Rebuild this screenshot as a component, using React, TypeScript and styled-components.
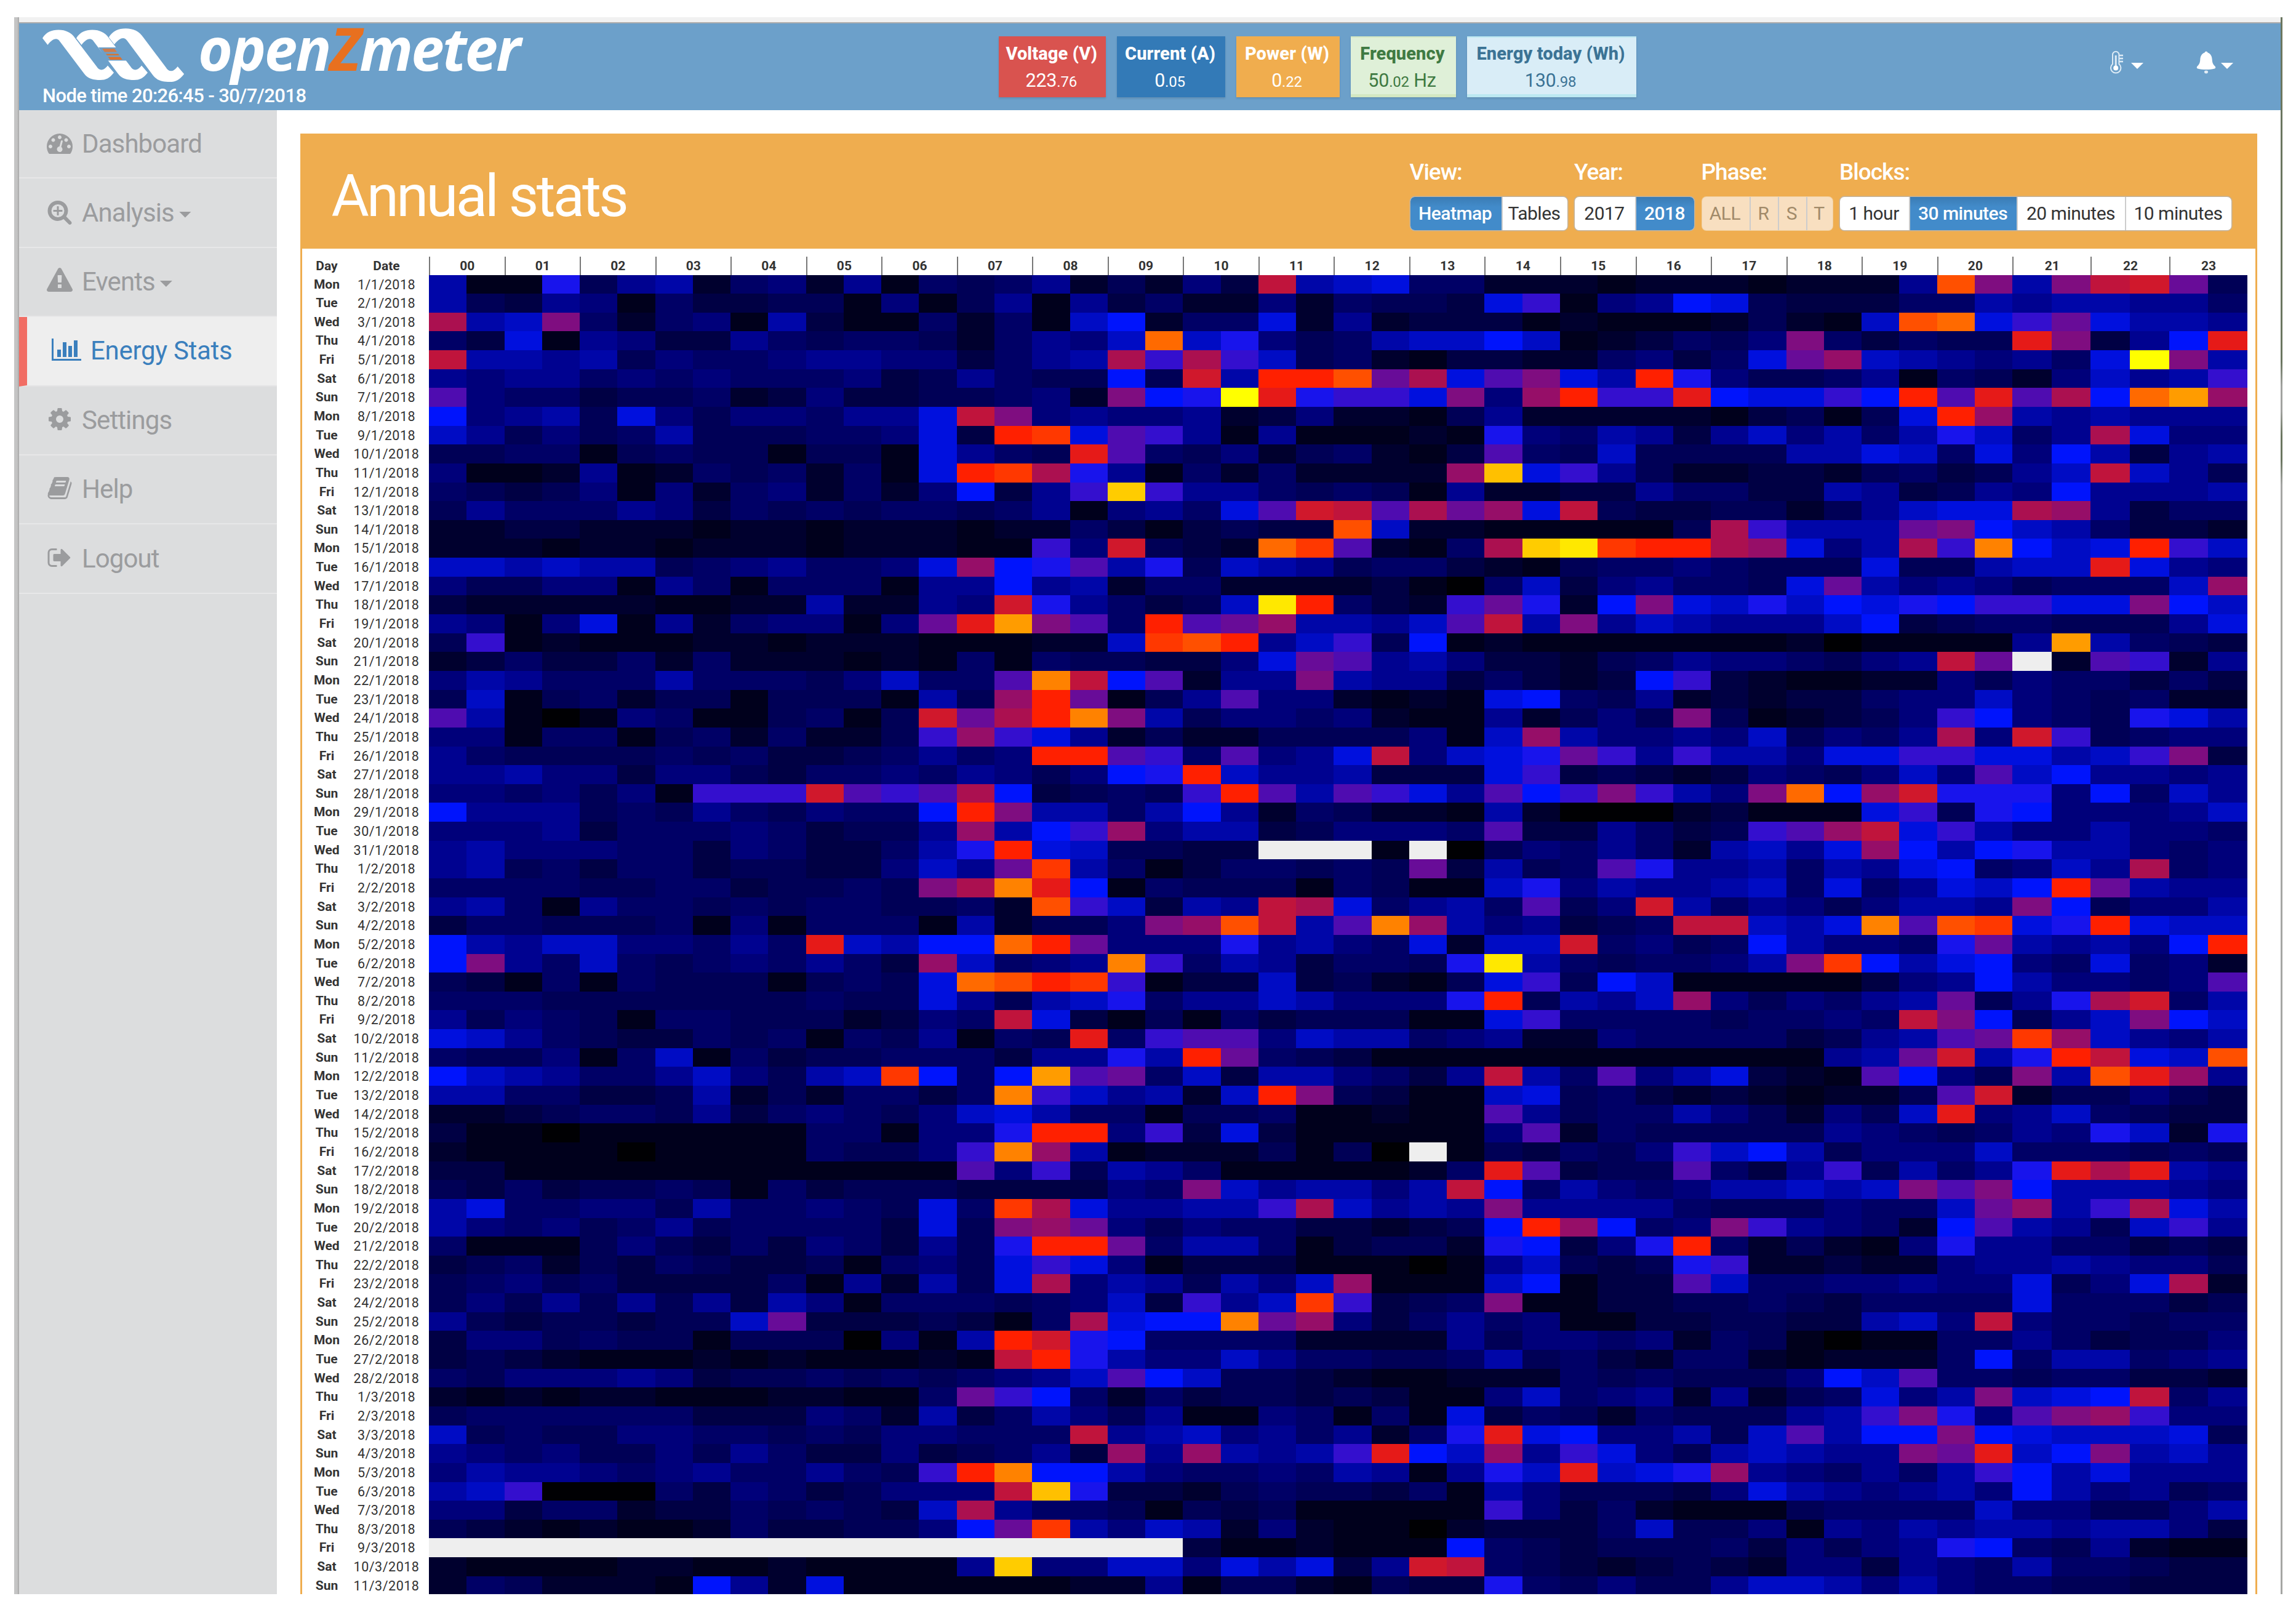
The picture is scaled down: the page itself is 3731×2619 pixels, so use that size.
import React from 'react';
import styled, { createGlobalStyle, css } from 'styled-components';

const GlobalStyle = createGlobalStyle`
  * { box-sizing: border-box; }
  html, body { margin: 0; padding: 0; background: #fff; }
  body { font-family: Roboto, "Open Sans", "Liberation Sans", sans-serif; color: #333; }
`;

const ORANGE = '#efad4f';
const BLUE = '#6ca0ca';

/* ---------- heat map data: one character per half hour ---------- */

const PALETTE: Record<string, string> = {
  '0': '#000003', '1': '#00001c', '2': '#00002e', '3': '#000044', '4': '#000056',
  '5': '#000066', '6': '#00007a', '7': '#000290', '8': '#0006a8', '9': '#000cc4',
  a: '#0010de', b: '#0014fc', c: '#1814ec', d: '#340fce', e: '#4f0cb0',
  f: '#680c98', g: '#7f0d80', h: '#960e68', i: '#ab1050', j: '#c0143c',
  k: '#d0182c', l: '#e61a18', m: '#ff2000', n: '#ff3800', o: '#ff5000',
  p: '#ff6a00', q: '#ff8200', r: '#ff9c00', s: '#ffc000', t: '#ffcc00',
  u: '#ffe800', v: '#ffff00', W: '#eeeeee',
};

const READINGS: string[] = [
  '811c4782562715 45724263j89a552221 22212227og8gjkf4',
  '84376153344161 47173522625443ad16 7ba4333558788775',
  'i89g5256183115 2519b255a272333121 1124219opadfa887',
  '53a17633754554 25769p9c645899b912 3546g53544lg37bl',
  'j8878465567766 3578idid9452133225 635afh987675avg8',
  '76775656555634 7544b4k8mmofiaega8 mc6445715426978d',
  'e6553445236334 4562gbcvlcddag6hmd dlbaadbmeleibprh',
  'b6784a6466577a jg6766723622147222 2213414amh878777',
  '9746458444556a 3mnaed71711121c658 73796858c957ia66',
  '4455145441441a 754le546245213e549 444488a95a6b8378',
  '6112712545251a mnic715252222hsad7 422332453479j974',
  '54346162562526 b37dtd775454172233 75533873476b7778',
  '47555763545455 4571675aekjeifhaj4 33442479aaih7355',
  '22332221221222 1225313433o9221111 14id888fgb985332',
  '22212212221222 11d6k432pne215itun mmiha68idqb9amd9',
  '9989884567556a hbce8c498745532145 565444a44899la76',
  '64466175155517 7b7825522223105936 7554af867645559h',
  '32222211228227 6kc75349um532dfc2b ga9c9bacbddaagb9',
  '7616a17256616f lrge5mefh8879ej8g7 987779b34554447a',
  '4d121112212221 11229nom79d4b12111 11112011117r8543',
  '23533525222121 51544336afe7863324 57665467jfW2ed27',
  '68755585554695 5eqjbe277g87735323 bd32112264655353',
  '49145244144418 4hmf147e662121ab54 7232335669654522',
  'e810165114514 kfimqg84665 62117246 4g412346db654ca8',
  '6615514525224 dhda7242244 44619h86 67694657i6kd4566',
  '7544445453345 756mmed5e67 aj69acfd 7d886aaddaa89dg3',
  '7786636643556 57646bcm977 8333ad34 323654696e9b7767',
  '6656461dddked eib3454dme8 eda7ebdg d86gpbhkccc6b597',
  'b777454754655 bmg8858b725 42218200 023111ad4cb66679',
  '6667355565344 7h8bdh68834 6665e337 534dehjad8668665',
  '7866655365335 8cma94433WW W1W04657 52897ahb8bc88656',
  '7845355344336 97fn8513554 54f3845e c778587ab5697i56',
  '5555445534454 giqlb154441 54119c68 77895a57a9bmf877',
  '7851755454554 452od9387ji a5785e46 k857646887gb4668',
  '3554445161555 182446ghoj8 eqh86734 5jj98aqeonacma99',
  'b879966575l98 bbpmf666c78 65a299k5 645b8665cf8786bm',
  'bg75954565753 h9567qd5873 554cu854 5568gnb8ab65a562',
  '4315154441454 apomnd13393 4214ad4b 911111367b86656e',
  '5554444444544 a7489c57798 666cm487 9h646578f47cik58',
  '7465415544423 65ja3141534 4411ad55 5545565jgb479gb9',
  'a975433545154 7154l5dee69 88567226 55553478efnh9768',
  '5446159153445 55377c8mf54 31111111 1111178fk8cmja9o',
  'b98755796489n b5bref59388 6537j85e 68a321eb64g8olh7',
  '8855334824255 35qd97829mg 43119a45 32321224ek244643',
  '2234554735654 69a85514451 1211e745 58642649l6795433',
  '3110111111551 66cmm6d3a31 11116e25 444447654576c92c',
  '2111101111544 6dqh8122241 40W14354 6d9b846669555454',
  '3311111111111 1e6d4875111 1125le34 4e537d4857clil87',
  '4353445415344 433336 5g978 868jb586 5688989gegb88876',
  '8a55664855654 a5nia7788di 9787g777 754446559fh8dia8',
  '8656457455553 a4ghf646553 3234bmhb 56gd7652be8749d7',
  '5111464353653 74cmmf58851 3442cb36 cm524216c7755343',
  '3452435433415 64ada613331 11017943 4cd2232267787664',
  '4564533335172 84ai6874869 h1119b13 3e95566766a46ai2',
  '4647474738615 5545693d79n d345g113 3445435555a55534',
  '743443449f333 4315iabbqfh 63575611 334433896j655455',
  '3664544144406 18mkcb55552 22274665 6254101155753446',
  '3432111212111 21jmc866975 54458453 255212225b588567',
  '5466676344545 45679eb9443 21122254 54446b9e55455332',
  '2121221112211 5fdb5253443 43116956 727245a68g9abj57',
  '4555555333652 83586471165 151a3542 544478dgc6eghd66',
  '9454466554546 6555j789675 725clab6 6849e8bbgba999a4',
  '7656446475336 34573h7h878 dlb9h7da 6489877gfl9bg897',
  '6877656755754 dmqbb865565 8717c9l9 ach765758db8a777',
  '89d0005365346 66jsc332454 43518644 436a876786b86745',
  '6635523354543 9i755414341 1111d635 2111455559664468',
  '4321211253344 6bfn8698262 11023335 9446176878878863',
  'WWWWWWWWWWWWW WWWWWWW3112 111b5434 44536467cb547211',
  '2111122112111 17t66996a8a 37kj5432 3432663765855433',
  '2542221b72a11 11112271442 1433c546 4479986865544333',
].map((line) => line.replace(/\s+/g, ''));

const DAY_NAMES = ['Sun', 'Mon', 'Tue', 'Wed', 'Thu', 'Fri', 'Sat'];

const DAYS = READINGS.map((values, index) => {
  const date = new Date(2018, 0, 1 + index);
  return {
    day: DAY_NAMES[date.getDay()],
    date: `${date.getDate()}/${date.getMonth() + 1}/${date.getFullYear()}`,
    values: values.split(''),
  };
});

const HOURS = Array.from({ length: 24 }, (_, h) => String(h).padStart(2, '0'));

/* ---------- window frame ---------- */

const Page = styled.div`
  width: 3731px;
  height: 2619px;
  padding: 28px 0 0 23px;
  background: #fff;
  overflow: hidden;
`;

const Frame = styled.div`
  display: grid;
  grid-template-columns: 8px 3675px 3px;
  grid-template-rows: 2562px;
  width: 3686px;
`;

const LeftEdge = styled.div`
  background: linear-gradient(90deg, #c4c4c4 0 60%, #a6a6a6);
`;

const RightEdge = styled.div`
  background: linear-gradient(180deg, #6b7660 0 560px, #a2a3a0 600px 640px, #6b7660 680px 720px, #a5a6a4 760px);
`;

const Screen = styled.div`
  display: flex;
  flex-direction: column;
  min-height: 0;
`;

const ToolbarEdge = styled.div`
  flex: none;
  height: 10px;
  background: #f1f1f1;
  border-bottom: 2px solid #adadad;
`;

const Body = styled.div`
  display: flex;
  flex: 1;
  min-height: 0;
  overflow: hidden;
`;

/* ---------- header ---------- */

const Header = styled.header`
  display: flex;
  flex: none;
  height: 141px;
  background: ${BLUE};
  color: #fff;
`;

const Brand = styled.div`
  width: 1592px;
  padding-left: 38px;
`;

const BrandRow = styled.div`
  display: flex;
  gap: 22px;
  height: 98px;
`;

const Mark = styled.svg`
  display: block;
  margin-top: 7px;
`;

const Wordmark = styled.div`
  font: italic 700 96px/80px "Open Sans", sans-serif;
  letter-spacing: -2.8px;
  white-space: nowrap;
`;

const Zed = styled.span`
  color: #e8701f;
`;

const NodeTime = styled.div`
  font-size: 31px;
  font-weight: 500;
  line-height: 39px;
  letter-spacing: -0.6px;
`;

const Stats = styled.div`
  display: flex;
  gap: 18px;
  padding-top: 21px;
`;

type Tone = 'danger' | 'primary' | 'warning' | 'success' | 'info';

const TONES: Record<Tone, { bg: string; edge: string; fg: string }> = {
  danger: { bg: '#d9534f', edge: '#d9534f', fg: '#fff' },
  primary: { bg: '#337ab7', edge: '#337ab7', fg: '#fff' },
  warning: { bg: '#f0ad4e', edge: '#f0ad4e', fg: '#fff' },
  success: { bg: '#dff0d8', edge: '#d3e8c2', fg: '#3f7a42' },
  info: { bg: '#d9edf7', edge: '#bce8f1', fg: '#3b7395' },
};

const StatBox = styled.div<{ $tone: Tone; $width: number }>`
  width: ${(p) => p.$width}px;
  height: 99px;
  padding-top: 11px;
  text-align: center;
  white-space: nowrap;
  color: ${(p) => TONES[p.$tone].fg};
  background: ${(p) => TONES[p.$tone].bg};
  box-shadow: inset 0 -5px 0 ${(p) => TONES[p.$tone].edge}, inset 0 2px 0 ${(p) => TONES[p.$tone].edge},
    0 2px 3px rgba(0, 0, 0, 0.12);
`;

const StatName = styled.div`
  margin-left: -2px;
  font-size: 29px;
  font-weight: 800;
  line-height: 35px;
  letter-spacing: 0.1px;
`;

const StatValue = styled.div`
  margin-left: -3px;
  font-size: 30.5px;
  line-height: 52px;
  letter-spacing: -0.2px;

  small { font-size: 24px; }
`;

const HeaderTools = styled.div`
  display: flex;
  align-items: flex-start;
  margin-left: auto;
  padding: 44px 77px 0 0;
`;

const Tool = styled.div<{ $gap: number; $before: number }>`
  display: flex;
  gap: ${(p) => p.$gap}px;
  margin-left: ${(p) => p.$before}px;
`;

const Caret = styled.span<{ $top: number }>`
  width: 20px;
  height: 10px;
  margin-top: ${(p) => p.$top}px;
  background: currentColor;
  clip-path: polygon(0 0, 100% 0, 50% 100%);
`;

/* ---------- sidebar ---------- */

const Sidebar = styled.nav`
  flex: none;
  width: 418.5px;
  background: #dcddde;
`;

const NavItem = styled.div<{ $active?: boolean }>`
  display: flex;
  align-items: center;
  height: 112.4px;
  padding: 0 0 1px 45px;
  border-bottom: 2px solid #e7e7e8;
  font-size: 42px;
  letter-spacing: -0.9px;
  color: #9b9c9e;

  &:first-child { height: 111.4px; }
  ${(p) =>
    p.$active &&
    css`
      padding-left: 40px;
      border-left: 13px solid #f16d64;
      border-bottom-color: #e4e4e5;
      background: #eee;
      color: #3a7fbd;
      letter-spacing: -0.3px;
    `}
`;

const NavIcon = styled.svg`
  flex: none;
  height: 42px;
  margin: 0 15px 3px 0;
  fill: currentColor;
`;

const NavCaret = styled(Caret)`
  margin-left: 8px;
`;

/* ---------- panel ---------- */

const Main = styled.main`
  flex: 1;
  padding: 38px 38px 0;
`;

const Panel = styled.section`
  height: 2600px;
  border: 3px solid ${ORANGE};
  background: #fff;
`;

const PanelHead = styled.div`
  display: flex;
  justify-content: space-between;
  height: 184px;
  padding: 0 39px 0 48px;
  background: ${ORANGE};
  color: #fff;
`;

const Title = styled.h1`
  margin: 0;
  padding-top: 14px;
  font-size: 94px;
  font-weight: 400;
  line-height: 170px;
  letter-spacing: -3.7px;
`;

const Filters = styled.div`
  display: flex;
  gap: 12.5px;
  margin-top: 40px;
`;

const FilterLabel = styled.div`
  height: 60px;
  margin-left: -1px;
  font-size: 37px;
  font-weight: 500;
  line-height: 40px;
  letter-spacing: -1px;
`;

const ButtonGroup = styled.div<{ $disabled?: boolean }>`
  display: flex;
  height: 54px;
  overflow: hidden;
  border-radius: 7px;
  box-shadow: 0 0 0 1.5px rgba(190, 180, 165, 0.9);
  background: #fff;
  ${(p) =>
    p.$disabled &&
    css`
      background: #f8dfc0;
      box-shadow: 0 0 0 1px #f0cf9f;
    `}
`;

const Segment = styled.button<{ $width: number; $active?: boolean; $disabled?: boolean }>`
  width: ${(p) => p.$width}px;
  padding: 0 2px 0 0;
  border: 0;
  background: transparent;
  color: #333;
  font: 400 30px/54px Roboto, sans-serif;
  letter-spacing: -0.5px;
  white-space: nowrap;

  & + & { border-left: 2px solid ${(p) => (p.$disabled ? '#dfc5a2' : '#ccc')}; }
  ${(p) =>
    p.$disabled &&
    css`
      color: #a18a69;
    `}
  ${(p) =>
    p.$active &&
    css`
      background: linear-gradient(180deg, #3b7cb4, #428bca 30%);
      color: #fff;
      font-weight: 500;
      && { border-left: 0; }
    `}
`;

/* ---------- heat map ---------- */

const LINE_COLUMNS = '81px 113px 12.5px';

const HeadLine = styled.div`
  display: grid;
  grid-template-columns: ${LINE_COLUMNS} repeat(21, 122.54px) repeat(3, 127.2px);
  height: 42.5px;
  padding-top: 12.5px;
  font-size: 21px;
  font-weight: 700;
  line-height: 30px;
  text-align: center;
`;

const HourLabel = styled.div`
  border-left: 2px solid #777;
  border-bottom: 1px solid #888;
`;

const DayLine = styled.div`
  display: grid;
  grid-template-columns: ${LINE_COLUMNS} repeat(42, 61.27px) repeat(6, 63.6px);
  height: 30.65px;
  font-size: 21px;
  line-height: 31.8px;
  text-align: center;
`;

const DayName = styled.div`
  font-weight: 700;
`;

const DayDate = styled.div`
  font-size: 21.5px;
  letter-spacing: 0.5px;
  white-space: nowrap;
`;

const Spacer = styled.div``;

const Cell = styled.div<{ $level: string }>`
  background: ${(p) => PALETTE[p.$level]};
`;

/* ---------- icons ---------- */

const ICONS = {
  dashboard:
    'M384 1152q0-53-37.5-90.5t-90.5-37.5-90.5 37.5-37.5 90.5 37.5 90.5 90.5 37.5 90.5-37.5 37.5-90.5zm192-448q0-53-37.5-90.5t-90.5-37.5-90.5 37.5-37.5 90.5 37.5 90.5 90.5 37.5 90.5-37.5 37.5-90.5zm428 481l101-382q6-26-7.5-48.5t-38.5-29.5-48 6.5-30 39.5l-101 382q-60 5-107 43.5t-63 98.5q-20 77 20 146t117 89 146-20 89-117q16-60-6-117t-72-91zm660-33q0-53-37.5-90.5t-90.5-37.5-90.5 37.5-37.5 90.5 37.5 90.5 90.5 37.5 90.5-37.5 37.5-90.5zm-640-640q0-53-37.5-90.5t-90.5-37.5-90.5 37.5-37.5 90.5 37.5 90.5 90.5 37.5 90.5-37.5 37.5-90.5zm448 192q0-53-37.5-90.5t-90.5-37.5-90.5 37.5-37.5 90.5 37.5 90.5 90.5 37.5 90.5-37.5 37.5-90.5zm320 448q0 261-141 483-19 29-54 29h-1402q-35 0-54-29-141-221-141-483 0-182 71-348t191-286 286-191 348-71 348 71 286 191 191 286 71 348z',
  search:
    'M1088 800v64q0 13-9.5 22.5t-22.5 9.5h-224v224q0 13-9.5 22.5t-22.5 9.5h-64q-13 0-22.5-9.5t-9.5-22.5v-224h-224q-13 0-22.5-9.5t-9.5-22.5v-64q0-13 9.5-22.5t22.5-9.5h224v-224q0-13 9.5-22.5t22.5-9.5h64q13 0 22.5 9.5t9.5 22.5v224h224q13 0 22.5 9.5t9.5 22.5zm128 32q0-185-131.5-316.5t-316.5-131.5-316.5 131.5-131.5 316.5 131.5 316.5 316.5 131.5 316.5-131.5 131.5-316.5zm512 832q0 53-37.5 90.5t-90.5 37.5q-54 0-90-38l-343-342q-179 124-399 124-143 0-273.5-55.5t-225-150-150-225-55.5-273.5 55.5-273.5 150-225 225-150 273.5-55.5 273.5 55.5 225 150 150 225 55.5 273.5q0 220-124 399l343 343q37 37 37 90z',
  warning:
    'M1024 1375v-190q0-14-9.5-23.5t-22.5-9.5h-192q-13 0-22.5 9.5t-9.5 23.5v190q0 14 9.5 23.5t22.5 9.5h192q13 0 22.5-9.5t9.5-23.5zm-2-374l18-459q0-12-10-19-13-11-24-11h-220q-11 0-24 11-10 7-10 21l17 457q0 10 10 16.5t24 6.5h185q14 0 23.5-6.5t10.5-16.5zm-14-934l768 1408q35 63-2 126-17 29-46.5 46t-63.5 17h-1536q-34 0-63.5-17t-46.5-46q-37-63-2-126l768-1408q17-31 47-49t65-18 65 18 47 49z',
  chart:
    'M640 896v512h-256v-512h256zm384-512v1024h-256v-1024h256zm1024 1152v128h-2048v-1536h128v1408h1920zm-640-896v768h-256v-768h256zm384-384v1152h-256v-1152h256z',
  cog:
    'M1152 896q0-106-75-181t-181-75-181 75-75 181 75 181 181 75 181-75 75-181zm512-109v222q0 12-8 23t-20 13l-185 28q-19 54-39 91 35 50 107 138 10 12 10 25t-9 23q-27 37-99 108t-94 71q-12 0-26-9l-138-108q-44 23-91 38-16 136-29 186-7 28-36 28h-222q-14 0-24.5-8.5t-11.5-21.5l-28-184q-49-16-90-37l-141 107q-10 9-25 9-14 0-25-11-126-114-165-168-7-10-7-23 0-12 8-23 15-21 51-66.5t54-70.5q-27-50-41-99l-183-27q-13-2-21-12.5t-8-23.5v-222q0-12 8-23t19-13l186-28q14-46 39-92-40-57-107-138-10-12-10-24 0-10 9-23 26-36 98.5-107.5t94.5-71.5q13 0 26 10l138 107q44-23 91-38 16-136 29-186 7-28 36-28h222q14 0 24.5 8.5t11.5 21.5l28 184q49 16 90 37l142-107q9-9 24-9 13 0 25 10 129 119 165 170 7 8 7 22 0 12-8 23-15 21-51 66.5t-54 70.5q26 50 41 98l183 28q13 2 21 12.5t8 23.5z',
  book:
    'M1703 478q40 57 18 129l-275 906q-19 64-76.5 107.5t-122.5 43.5h-923q-77 0-148.5-53.5t-99.5-131.5q-24-67-2-127 0-4 3-27t4-37q1-8-3-21.5t-3-19.5q2-11 8-21t16.5-23.5 16.5-23.5q23-38 45-91.5t30-91.5q3-10 .5-30t-.5-28q3-11 17-28t17-23q21-36 42-92t25-90q1-9-2.5-32t.5-28q4-13 22-30.5t22-22.5q19-26 42.5-84.5t27.5-96.5q1-8-3-25.5t-2-26.5q2-8 9-18t18-23 17-21q8-12 16.5-30.5t15-35 16-36 19.5-32 26.5-23.5 36-11.5 47.5 5.5l-1 3q38-9 51-9h761q74 0 114 56t18 130l-274 906q-36 119-71.5 153.5t-128.5 34.5h-869q-27 0-38 15-11 16-1 43 24 70 144 70h923q29 0 56-15.5t35-41.5l300-987q7-22 5-57 38 15 59 43zm-1064 2q-4 13 2 22.5t20 9.5h608q13 0 25.5-9.5t16.5-22.5l21-64q4-13-2-22.5t-20-9.5h-608q-13 0-25.5 9.5t-16.5 22.5zm-83 256q-4 13 2 22.5t20 9.5h608q13 0 25.5-9.5t16.5-22.5l21-64q4-13-2-22.5t-20-9.5h-608q-13 0-25.5 9.5t-16.5 22.5z',
  logout:
    'M704 1440q0 4 1 20t.5 26.5-3 23.5-10 19.5-20.5 6.5h-320q-119 0-203.5-84.5t-84.5-203.5v-704q0-119 84.5-203.5t203.5-84.5h320q13 0 22.5 9.5t9.5 22.5q0 4 1 20t.5 26.5-3 23.5-10 19.5-20.5 6.5h-320q-66 0-113 47t-47 113v704q0 66 47 113t113 47h312l11.5 1 11.5 3 8 5.5 7 9 2 13.5zm928-544q0 26-19 45l-544 544q-19 19-45 19t-45-19-19-45v-288h-448q-26 0-45-19t-19-45v-384q0-26 19-45t45-19h448v-288q0-26 19-45t45-19 45 19l544 544q19 19 19 45z',
};

type IconName = keyof typeof ICONS;

const NAV: { icon: IconName; label: string; caret?: boolean; active?: boolean }[] = [
  { icon: 'dashboard', label: 'Dashboard' },
  { icon: 'search', label: 'Analysis', caret: true },
  { icon: 'warning', label: 'Events', caret: true },
  { icon: 'chart', label: 'Energy Stats', active: true },
  { icon: 'cog', label: 'Settings' },
  { icon: 'book', label: 'Help' },
  { icon: 'logout', label: 'Logout' },
];

const STATS: { name: string; whole: string; part: string; unit?: string; tone: Tone; width: number }[] = [
  { name: 'Voltage (V)', whole: '223', part: '.76', tone: 'danger', width: 173.5 },
  { name: 'Current (A)', whole: '0', part: '.05', tone: 'primary', width: 176 },
  { name: 'Power (W)', whole: '0', part: '.22', tone: 'warning', width: 168 },
  { name: 'Frequency', whole: '50', part: '.02', unit: ' Hz', tone: 'success', width: 171 },
  { name: 'Energy today (Wh)', whole: '130', part: '.98', tone: 'info', width: 275 },
];

type Option = { text: string; width: number; active?: boolean };

const FILTERS: { label: string; disabled?: boolean; options: Option[] }[] = [
  { label: 'View:', options: [{ text: 'Heatmap', width: 148, active: true }, { text: 'Tables', width: 107 }] },
  { label: 'Year:', options: [{ text: '2017', width: 98 }, { text: '2018', width: 96, active: true }] },
  {
    label: 'Phase:',
    disabled: true,
    options: [{ text: 'ALL', width: 77 }, { text: 'R', width: 46 }, { text: 'S', width: 46 }, { text: 'T', width: 43 }],
  },
  {
    label: 'Blocks:',
    options: [
      { text: '1 hour', width: 112 },
      { text: '30 minutes', width: 175, active: true },
      { text: '20 minutes', width: 176 },
      { text: '10 minutes', width: 173 },
    ],
  },
];

const RIBBON =
  'M69 62C75 52 84 48.500 95 48.500C107 48.500 116 53 122 62L157 108C161 115 168 116 175 106.500L185 118C178 127 172 130 163 130C152 130 143 128 137 120L97 67C93 61 86 62 77.500 73Z';

function LogoMark() {
  return (
    <Mark width={231} height={90} viewBox="69 45 231 90" fill="#fff">
      <path d={RIBBON} />
      <path d={RIBBON} transform="translate(55 0)" />
      <path d={RIBBON} transform="translate(104 -5.500) scale(1.055 1.065)" />
      <path d="M160 77L192 77L207 98.500L174 98.500Z" fill={BLUE} />
      <path d="M166 79H186L190 84.500H170Z" fill="#cc7d4e" />
      <path d="M172 87.500H192L194 90H174Z" fill="#d9742f" />
      <path d="M175.500 92.500H195.500L199 97H179Z" fill="#dc7330" />
    </Mark>
  );
}

function Thermometer() {
  return (
    <svg width={22} height={38} viewBox="0 0 22 38" fill="none" stroke="#dceaf5" strokeWidth={2}>
      <path d="M4 22V7a5.200 5.200 0 0 1 10.400 0v15a8.200 8.200 0 1 1-10.400 0z" />
      <path d="M9.200 8v18" strokeWidth={3} />
      <circle cx={9.200} cy={28.500} r={4} fill="#fff" stroke="none" />
      <path d="M15 8h6M15 13h6M15 18h6" strokeWidth={2.400} />
    </svg>
  );
}

function Bell() {
  return (
    <svg width={32} height={38} viewBox="0 0 32 38" fill="#fff">
      <path d="M13.500 3.500a2.600 2.600 0 0 1 5 0C23.500 5 25.500 10 25.700 15c.3 6 2.300 8.500 5 11 1 1.500.6 3-1 3.500C21 31.500 11 31.500 2.300 29.500c-1.600-.5-2-2-1-3.500 2.700-2.500 4.700-5 5-11C6.500 10 8.500 5 13.500 3.500z" />
      <ellipse cx={16} cy={35} rx={3} ry={2.400} opacity={0.8} />
    </svg>
  );
}

export default function App() {
  return (
    <>
      <GlobalStyle />
      <Page>
        <Frame>
          <LeftEdge />
          <Screen>
            <ToolbarEdge />
            <Header>
              <Brand>
                <BrandRow>
                  <LogoMark />
                  <Wordmark>
                    open<Zed>Z</Zed>meter
                  </Wordmark>
                </BrandRow>
                <NodeTime>Node time 20:26:45 - 30/7/2018</NodeTime>
              </Brand>
              <Stats>
                {STATS.map((s) => (
                  <StatBox key={s.name} $tone={s.tone} $width={s.width}>
                    <StatName>{s.name}</StatName>
                    <StatValue>
                      {s.whole}
                      <small>{s.part}</small>
                      {s.unit}
                    </StatValue>
                  </StatBox>
                ))}
              </Stats>
              <HeaderTools>
                <Tool $gap={12} $before={0}>
                  <Thermometer />
                  <Caret $top={20} />
                </Tool>
                <Tool $gap={8} $before={86}>
                  <Bell />
                  <Caret $top={20} />
                </Tool>
              </HeaderTools>
            </Header>
            <Body>
              <Sidebar>
                {NAV.map((item) => (
                  <NavItem key={item.label} $active={item.active}>
                    <NavIcon viewBox={item.icon === 'chart' ? '0 0 2048 1792' : '0 0 1792 1792'}>
                      <path d={ICONS[item.icon]} />
                    </NavIcon>
                    {item.label}
                    {item.caret && <NavCaret $top={7} />}
                  </NavItem>
                ))}
              </Sidebar>
              <Main>
                <Panel>
                  <PanelHead>
                    <Title>Annual stats</Title>
                    <Filters>
                      {FILTERS.map((f) => (
                        <div key={f.label}>
                          <FilterLabel>{f.label}</FilterLabel>
                          <ButtonGroup $disabled={f.disabled}>
                            {f.options.map((o) => (
                              <Segment key={o.text} $width={o.width} $active={o.active} $disabled={f.disabled}>
                                {o.text}
                              </Segment>
                            ))}
                          </ButtonGroup>
                        </div>
                      ))}
                    </Filters>
                  </PanelHead>
                  <HeadLine>
                    <div>Day</div>
                    <div>Date</div>
                    <Spacer />
                    {HOURS.map((h) => (
                      <HourLabel key={h}>{h}</HourLabel>
                    ))}
                  </HeadLine>
                  {DAYS.map((d) => (
                    <DayLine key={d.date}>
                      <DayName>{d.day}</DayName>
                      <DayDate>{d.date}</DayDate>
                      <Spacer />
                      {d.values.map((v, i) => (
                        <Cell key={i} $level={v} />
                      ))}
                    </DayLine>
                  ))}
                </Panel>
              </Main>
            </Body>
          </Screen>
          <RightEdge />
        </Frame>
      </Page>
    </>
  );
}
